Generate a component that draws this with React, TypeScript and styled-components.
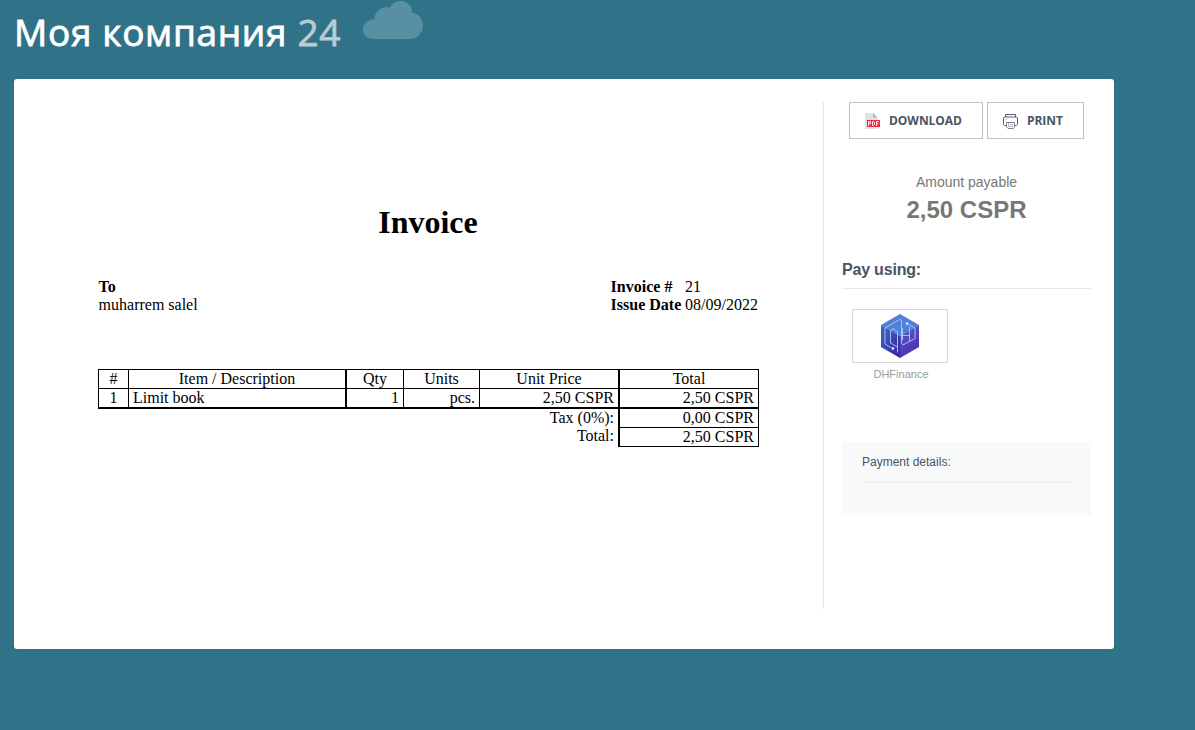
import React from "react";
import styled, { createGlobalStyle } from "styled-components";

const GlobalStyle = createGlobalStyle`
  * { box-sizing: border-box; }
  body {
    margin: 0;
    background: #307389;
    font-family: "Liberation Sans", Arial, sans-serif;
  }
`;

const Page = styled.div`
  height: 730px;
  overflow: hidden;
  padding-left: 14px;
`;

const Header = styled.header`
  display: flex;
  height: 79px;
`;

const Brand = styled.h1`
  margin: 0;
  padding: 5px 0 0;
  width: 349px;
  white-space: nowrap;
  font: 500 37px/54px "Open Sans", sans-serif;
  letter-spacing: 0.68px;
  color: #fff;
  -webkit-text-stroke: 0.8px currentColor;
`;

const BrandNumber = styled.span`
  color: #b9cbd3;
`;

const Cloud = styled.svg`
  display: block;
  width: 60px;
  height: 38px;
  margin-top: 1px;
`;

const Card = styled.main`
  display: flex;
  width: 1100px;
  height: 570px;
  padding-top: 23px;
  background: #fff;
  border-radius: 3px;
`;

const Document = styled.section`
  width: 810px;
  height: 507px;
  padding: 100px 0 0 84px;
  border-right: 1px solid #e6e7e9;
  font: 16px/18px "Liberation Serif", "Times New Roman", serif;
  color: #000;
`;

const DocTitle = styled.h2`
  width: 660px;
  margin: 0;
  text-align: center;
  font-size: 32px;
  line-height: 40px;
`;

const Parties = styled.div`
  display: flex;
  justify-content: space-between;
  width: 661px;
  margin-top: 36px;
  padding-left: 0.6px;
`;

const Facts = styled.dl`
  display: grid;
  grid-template-columns: 74.4px 74px;
  margin: 0;
  white-space: nowrap;
`;

const FactName = styled.dt`
  font-weight: bold;
`;

const FactValue = styled.dd`
  margin: 0;
`;

const Items = styled.div`
  display: grid;
  grid-template-columns: 30px 217px 58px 76px 139px 141px;
  grid-template-rows: 19px 19px 20px 20px;
  width: 661px;
  margin-top: 55px;
`;

const Cell = styled.div<{
  $align?: string;
  $left?: number;
  $right?: number;
  $top?: number;
  $bottom?: number;
}>`
  padding: 0 4px;
  white-space: nowrap;
  text-align: ${(p) => p.$align ?? "center"};
  border: 0 solid #000;
  border-left-width: ${(p) => p.$left ?? 1}px;
  border-right-width: ${(p) => p.$right ?? 0}px;
  border-top-width: ${(p) => p.$top ?? 1}px;
  border-bottom-width: ${(p) => p.$bottom ?? 0}px;
`;

const SummaryLabel = styled.div<{ $ruled?: boolean }>`
  grid-column: 1 / 6;
  padding-right: 4px;
  text-align: right;
  border-top: ${(p) => (p.$ruled ? "2px solid #000" : "0")};
`;

const Sidebar = styled.aside`
  width: 249px;
  margin-left: 18px;
`;

const Actions = styled.div`
  display: flex;
  gap: 4px;
  padding-left: 7px;
`;

const Button = styled.button<{ $width: number }>`
  display: flex;
  align-items: center;
  width: ${(p) => p.$width}px;
  height: 37px;
  padding: 0 0 0 15px;
  border: 1px solid #bdc1c8;
  background: #fff;
  color: #4a5462;
  font: bold 12px/17px "Open Sans", sans-serif;
  letter-spacing: -0.05px;

  svg {
    width: 16px;
    height: 16px;
    margin-right: 8px;
    flex: none;
  }
`;

const AmountLabel = styled.div`
  margin-top: 35px;
  text-align: center;
  font-size: 14px;
  line-height: 16px;
  color: #777;
`;

const Amount = styled.div`
  margin-top: 6px;
  text-align: center;
  font-size: 24px;
  font-weight: bold;
  line-height: 28px;
  color: #777;
`;

const PayTitle = styled.h3`
  height: 29px;
  margin: 36px 0 0;
  padding-top: 1px;
  border-bottom: 1px solid #e6e7e9;
  font-size: 16px;
  letter-spacing: -0.2px;
  line-height: 18px;
  color: #4a5462;
`;

const Method = styled.div`
  width: 98px;
  margin: 20px 0 0 10px;
  height: 133px;
  text-align: center;
  font-size: 11px;
  line-height: 14px;
  color: #9b9b9b;
`;

const MethodBox = styled.div`
  display: flex;
  justify-content: center;
  align-items: center;
  width: 96px;
  height: 54px;
  margin-bottom: 4px;
  border: 1px solid #d4d7da;
`;

const Details = styled.section`
  height: 73px;
  padding: 12px 20px 0;
  background: #f8fafa;
  font-size: 12px;
  color: #4a5462;
`;

const DetailsTitle = styled.div`
  height: 29px;
  line-height: 16px;
  border-bottom: 1px solid #ebedee;
`;

const PdfIcon = () => (
  <svg viewBox="0 0 16 16">
    <path d="M0 0h8l4.500 4.500V16H0z" fill="#dfe3e5" />
    <path d="M8 0l4.500 4.500H8z" fill="#afb8bf" />
    <path d="M2 7h13v7H2z" fill="#f2263f" />
    <path
      d="M3.500 13V8.500h2v2.200h-2M7.500 8.500v4h1.200l.8-.8V9.300l-.8-.8zM11.500 13V8.500H14M11.500 10.700h2"
      fill="none"
      stroke="#fff"
      strokeWidth=".9"
    />
  </svg>
);

const PrinterIcon = () => (
  <svg viewBox="0 0 16 16" fill="none" stroke="#535c69">
    <path d="M2.500 4V1.500h10V4M3 12.500H1.500l-1-1V5l1-1h12l1 1v6.500l-1 1H12" />
    <path d="M3.500 13V9.500h8v4.500l-1 1.500H5L3.500 14z" strokeOpacity=".75" />
    <path d="M5.500 9.500v4h4v-2h-3M2.500 6.500h1" strokeOpacity=".4" />
  </svg>
);

const FinanceLogo = () => (
  <svg width="38" height="44" viewBox="0 0 38 44">
    <defs>
      <linearGradient id="cubeLeft" x1="0" y1="0" x2=".8" y2="1">
        <stop stopColor="#3c68c5" />
        <stop offset="1" stopColor="#3829a5" />
      </linearGradient>
      <linearGradient id="cubeRight" x1="0" y1="0" x2=".4" y2="1">
        <stop stopColor="#4a66c8" />
        <stop offset="1" stopColor="#5929b2" />
      </linearGradient>
    </defs>
    <path d="M19 0l19 11-19 11L0 11z" fill="#4f80d8" />
    <path d="M0 11l19 11v22L0 33z" fill="url(#cubeLeft)" />
    <path d="M38 11L19 22v22l19-11z" fill="url(#cubeRight)" />
    <g fill="none" stroke="#b4c8f2" strokeWidth=".9">
      <path d="M11.500 34.500L4 30V14L18.500 5.500l2 1V29l1.500 2 12-6.500V14l-8-4.500" />
      <path d="M16.500 38.500V17.500L12 14.500l-2.500 2V29l7 4M21.500 14v12M21.500 21.500h7M28.500 13v14.500" />
    </g>
    <circle cx="12" cy="34.500" r="1.300" fill="#dce7ff" />
    <circle cx="26" cy="9.500" r="1.300" fill="#dce7ff" />
  </svg>
);

export default function App() {
  return (
    <Page>
      <GlobalStyle />
      <Header>
        <Brand>
          Моя компания <BrandNumber>24</BrandNumber>
        </Brand>
        <Cloud viewBox="0 0 60 38" fill="#598fa2">
          <path d="M10 38C4 38 0 34 0 28.500 0 23 5 18 11.500 18.500 11 11 18 5 27 6.500 29 2 33 0 38 0c7 0 11 5 11 11.500C56 13 60 18 60 24.500 60 32 54 38 47 38z" />
        </Cloud>
      </Header>
      <Card>
        <Document>
          <DocTitle>Invoice</DocTitle>
          <Parties>
            <div>
              <b>To</b>
              <div>muharrem salel</div>
            </div>
            <Facts>
              <FactName>Invoice #</FactName>
              <FactValue>21</FactValue>
              <FactName>Issue Date</FactName>
              <FactValue>08/09/2022</FactValue>
            </Facts>
          </Parties>
          <Items>
            <Cell>#</Cell>
            <Cell>Item / Description</Cell>
            <Cell $left={2}>Qty</Cell>
            <Cell>Units</Cell>
            <Cell>Unit Price</Cell>
            <Cell $left={2} $right={1}>Total</Cell>
            <Cell>1</Cell>
            <Cell $align="left">Limit book</Cell>
            <Cell $align="right" $left={2}>1</Cell>
            <Cell $align="right">pcs.</Cell>
            <Cell $align="right">2,50 CSPR</Cell>
            <Cell $align="right" $left={2} $right={1}>2,50 CSPR</Cell>
            <SummaryLabel $ruled>Tax (0%):</SummaryLabel>
            <Cell $align="right" $left={2} $right={1} $top={2}>0,00 CSPR</Cell>
            <SummaryLabel>Total:</SummaryLabel>
            <Cell $align="right" $left={2} $right={1} $bottom={1}>2,50 CSPR</Cell>
          </Items>
        </Document>
        <Sidebar>
          <Actions>
            <Button $width={134}><PdfIcon />DOWNLOAD</Button>
            <Button $width={97}><PrinterIcon />PRINT</Button>
          </Actions>
          <AmountLabel>Amount payable</AmountLabel>
          <Amount>2,50 CSPR</Amount>
          <PayTitle>Pay using:</PayTitle>
          <Method>
            <MethodBox><FinanceLogo /></MethodBox>
            DHFinance
          </Method>
          <Details>
            <DetailsTitle>Payment details:</DetailsTitle>
          </Details>
        </Sidebar>
      </Card>
    </Page>
  );
}
